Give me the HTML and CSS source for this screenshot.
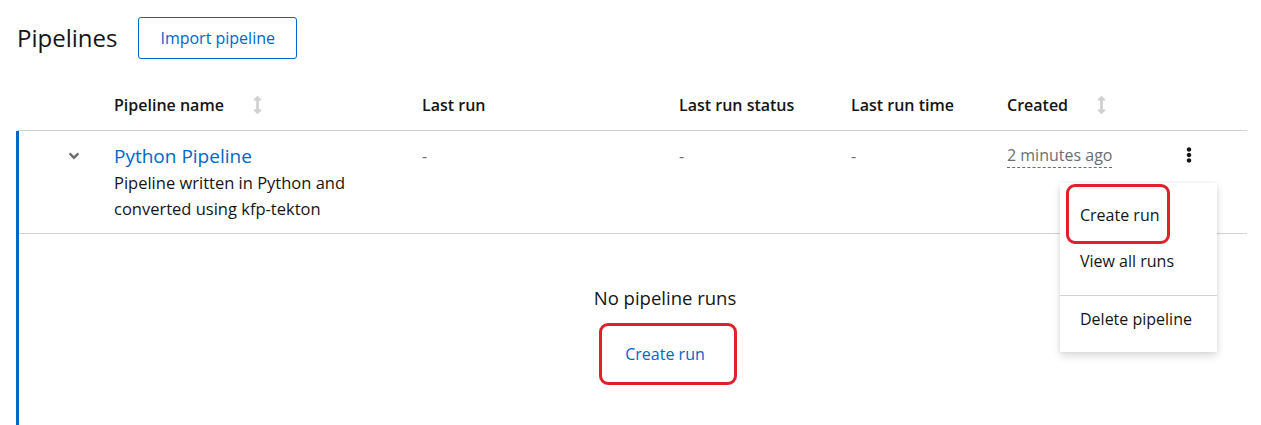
FILE: index.html
```html
<!DOCTYPE html>
<html lang="en">
<head>
<meta charset="utf-8">
<title>Pipelines</title>
<link rel="stylesheet" href="styles.css">
</head>
<body>
<div class="page">
  <div class="titlebar">
    <h1 class="title">Pipelines</h1>
    <button class="btn-secondary">Import pipeline</button>
  </div>

  <div class="table">
    <div class="row head">
      <div class="cell"></div>
      <div class="cell th">Pipeline name
        <svg class="sort" viewBox="0 0 256 512" width="9" height="18"><path d="M214.059 377.941H168V134.059h46.059c21.382 0 32.09-25.851 16.971-40.971L144.971 7.029c-9.373-9.373-24.568-9.373-33.941 0L24.971 93.088c-15.119 15.119-4.411 40.971 16.971 40.971H88v243.882H41.941c-21.382 0-32.090 25.851-16.971 40.971l86.059 86.059c9.373 9.373 24.568 9.373 33.941 0l86.059-86.059c15.12-15.119 4.412-40.971-16.970-40.971z"/></svg>
      </div>
      <div class="cell th">Last run</div>
      <div class="cell th">Last run status</div>
      <div class="cell th">Last run time</div>
      <div class="cell th">Created
        <svg class="sort" viewBox="0 0 256 512" width="9" height="18"><path d="M214.059 377.941H168V134.059h46.059c21.382 0 32.09-25.851 16.971-40.971L144.971 7.029c-9.373-9.373-24.568-9.373-33.941 0L24.971 93.088c-15.119 15.119-4.411 40.971 16.971 40.971H88v243.882H41.941c-21.382 0-32.090 25.851-16.971 40.971l86.059 86.059c9.373 9.373 24.568 9.373 33.941 0l86.059-86.059c15.12-15.119 4.412-40.971-16.970-40.971z"/></svg>
      </div>
      <div class="cell"></div>
    </div>

    <div class="expanded">
      <div class="row body">
        <div class="cell toggle">
          <svg viewBox="0 0 320 512" width="10" height="16"><path d="M143 352.3L7 216.3c-9.4-9.4-9.4-24.6 0-33.9l22.6-22.6c9.4-9.4 24.6-9.4 33.9 0l96.4 96.4 96.4-96.4c9.4-9.4 24.6-9.4 33.9 0l22.6 22.6c9.4 9.4 9.4 24.6 0 33.9l-136 136c-9.2 9.4-24.4 9.4-33.8 0z"/></svg>
        </div>
        <div class="cell name">
          <a class="name-link">Python Pipeline</a>
          <div class="desc">Pipeline written in Python and converted using kfp-tekton</div>
        </div>
        <div class="cell muted">-</div>
        <div class="cell muted">-</div>
        <div class="cell muted">-</div>
        <div class="cell"><span class="timestamp">2 minutes ago</span></div>
        <div class="cell kebab">
          <svg viewBox="0 0 192 512" width="6" height="16"><path d="M96 184c39.8 0 72 32.2 72 72s-32.2 72-72 72-72-32.2-72-72 32.2-72 72-72zM24 80c0 39.8 32.2 72 72 72s72-32.2 72-72S135.8 8 96 8 24 40.2 24 80zm0 352c0 39.8 32.2 72 72 72s72-32.2 72-72-32.2-72-72-72-72 32.2-72 72z"/></svg>
        </div>
      </div>
      <div class="expand-content">
        <div class="empty-title">No pipeline runs</div>
        <div class="highlight-box">
          <button class="btn-link">Create run</button>
        </div>
      </div>
    </div>
  </div>

  <div class="menu">
    <div class="menu-highlight"></div>
    <div class="menu-item">Create run</div>
    <div class="menu-item">View all runs</div>
    <div class="menu-sep"></div>
    <div class="menu-item">Delete pipeline</div>
  </div>
</div>
</body>
</html>
```

FILE: styles.css
```css
* { box-sizing: border-box; }

html, body {
  margin: 0;
  padding: 0;
  background: #fff;
}

body {
  font-family: "Open Sans", "Liberation Sans", sans-serif;
  color: #151515;
  font-size: 16px;
  overflow: hidden;
  height: 425px;
}

.page {
  position: relative;
  padding: 17px 14px 0 16px;
}

.titlebar {
  display: flex;
  align-items: center;
  gap: 21px;
  height: 42px;
}

.title {
  margin: 0 0 0 1px;
  font-size: 24px;
  font-weight: 400;
  line-height: 32px;
}

.btn-secondary {
  font-family: inherit;
  font-size: 16px;
  color: #06c;
  background: #fff;
  border: 1px solid #06c;
  border-radius: 3px;
  height: 42px;
  padding: 0 21px;
  line-height: 24px;
}

.row {
  display: grid;
  grid-template-columns: 98px 308px 257px 172px 156px 165px 1fr;
}

.row.head {
  margin-left: 1px;
  grid-template-columns: 97px 308px 257px 172px 156px 165px 1fr;
  padding-top: 34px;
  padding-bottom: 13px;
  border-bottom: 1px solid #d2d2d2;
}

.th {
  font-weight: 600;
  line-height: 24px;
  display: flex;
  align-items: center;
}

.sort {
  fill: #d2d2d2;
  margin-left: 29px;
}

.expanded {
  border-left: 3px solid #06c;
  height: 300px;
}

.row.body {
  grid-template-columns: 95px 308px 257px 172px 156px 165px 1fr;
  padding-top: 12px;
  padding-bottom: 11px;
  border-bottom: 1px solid #d2d2d2;
}

.toggle {
  padding-left: 50px;
  padding-top: 5px;
}

.toggle svg {
  fill: #6a6e73;
  display: block;
}

.name-link {
  display: block;
  color: #06c;
  font-size: 19px;
  line-height: 27px;
}

.desc {
  line-height: 26px;
  max-width: 250px;
  font-size: 16.5px;
}

.muted {
  line-height: 27px;
  color: #6a6e73;
}

.timestamp {
  display: inline-block;
  margin-top: 1px;
  line-height: 23px;
  color: #6a6e73;
  border-bottom: 1px dashed #6a6e73;
}

.kebab {
  padding-left: 14px;
  padding-top: 4px;
}

.kebab svg {
  display: block;
  fill: #151515;
}

.expand-content {
  display: flex;
  flex-direction: column;
  align-items: center;
  padding-top: 50px;
  padding-left: 64px;
}

.empty-title {
  font-size: 18.5px;
  line-height: 27px;
}

.highlight-box {
  margin-top: 12px;
  margin-left: 5px;
  width: 138px;
  height: 62px;
  border: 3px solid #e0202a;
  border-radius: 9px;
  display: flex;
  align-items: center;
  justify-content: center;
}

.btn-link {
  font-family: inherit;
  font-size: 16px;
  color: #06c;
  background: none;
  border: 0;
  padding: 6px 16px;
  line-height: 24px;
  margin-right: 5px;
}

.menu {
  position: absolute;
  left: 1060px;
  top: 183px;
  width: 157px;
  height: 169px;
  background: #fff;
  padding-top: 9px;
  box-shadow: 0 4px 8px rgba(3, 3, 3, 0.14), 0 0 4px rgba(3, 3, 3, 0.06);
}

.menu-item {
  padding: 11px 20px;
  line-height: 24px;
  white-space: nowrap;
}

.menu-sep {
  height: 1px;
  background: #d2d2d2;
  margin: 11px 0 0;
}

.menu-highlight {
  position: absolute;
  left: 6px;
  top: 1px;
  width: 104px;
  height: 60px;
  border: 3px solid #e0202a;
  border-radius: 9px;
}
```
